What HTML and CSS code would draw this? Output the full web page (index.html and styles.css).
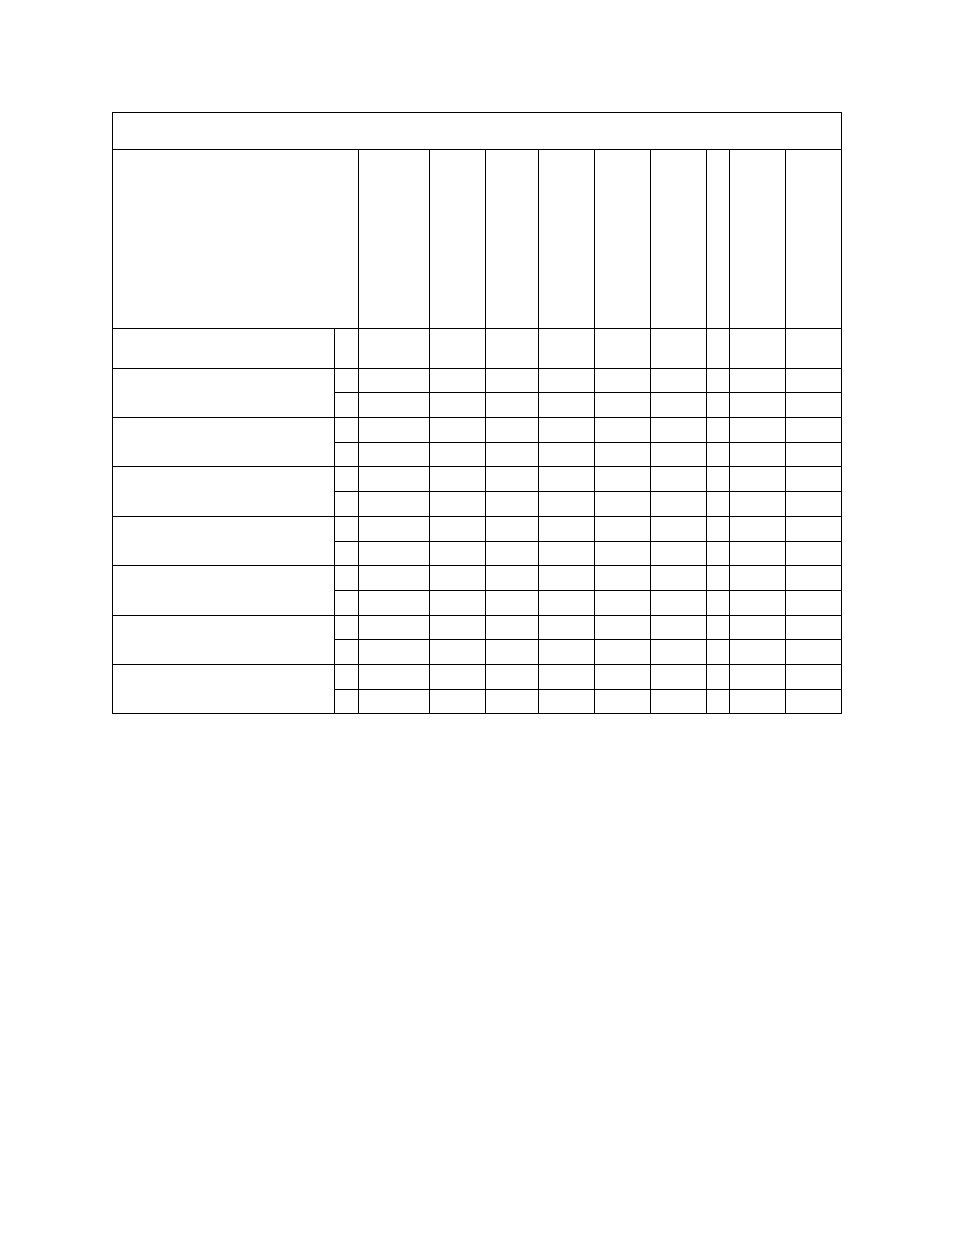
FILE: index.html
```html
<!DOCTYPE html>
<html>
<head>
<meta charset="utf-8">
<link rel="stylesheet" href="styles.css">
</head>
<body>
<div class="page">
  <div class="sheet">
    <div class="cell title"></div>
    <div class="cell head-label"></div>
    <div class="cell"></div><div class="cell"></div><div class="cell"></div><div class="cell"></div><div class="cell"></div><div class="cell"></div><div class="cell"></div><div class="cell"></div><div class="cell"></div>

    <div class="cell"></div><div class="cell"></div>
    <div class="cell"></div><div class="cell"></div><div class="cell"></div><div class="cell"></div><div class="cell"></div><div class="cell"></div><div class="cell"></div><div class="cell"></div><div class="cell"></div>

    <div class="cell group"></div>
    <div class="cell"></div><div class="cell"></div><div class="cell"></div><div class="cell"></div><div class="cell"></div><div class="cell"></div><div class="cell"></div><div class="cell"></div><div class="cell"></div><div class="cell"></div>
    <div class="cell"></div><div class="cell"></div><div class="cell"></div><div class="cell"></div><div class="cell"></div><div class="cell"></div><div class="cell"></div><div class="cell"></div><div class="cell"></div><div class="cell"></div>

    <div class="cell group"></div>
    <div class="cell"></div><div class="cell"></div><div class="cell"></div><div class="cell"></div><div class="cell"></div><div class="cell"></div><div class="cell"></div><div class="cell"></div><div class="cell"></div><div class="cell"></div>
    <div class="cell"></div><div class="cell"></div><div class="cell"></div><div class="cell"></div><div class="cell"></div><div class="cell"></div><div class="cell"></div><div class="cell"></div><div class="cell"></div><div class="cell"></div>

    <div class="cell group"></div>
    <div class="cell"></div><div class="cell"></div><div class="cell"></div><div class="cell"></div><div class="cell"></div><div class="cell"></div><div class="cell"></div><div class="cell"></div><div class="cell"></div><div class="cell"></div>
    <div class="cell"></div><div class="cell"></div><div class="cell"></div><div class="cell"></div><div class="cell"></div><div class="cell"></div><div class="cell"></div><div class="cell"></div><div class="cell"></div><div class="cell"></div>

    <div class="cell group"></div>
    <div class="cell"></div><div class="cell"></div><div class="cell"></div><div class="cell"></div><div class="cell"></div><div class="cell"></div><div class="cell"></div><div class="cell"></div><div class="cell"></div><div class="cell"></div>
    <div class="cell"></div><div class="cell"></div><div class="cell"></div><div class="cell"></div><div class="cell"></div><div class="cell"></div><div class="cell"></div><div class="cell"></div><div class="cell"></div><div class="cell"></div>

    <div class="cell group"></div>
    <div class="cell"></div><div class="cell"></div><div class="cell"></div><div class="cell"></div><div class="cell"></div><div class="cell"></div><div class="cell"></div><div class="cell"></div><div class="cell"></div><div class="cell"></div>
    <div class="cell"></div><div class="cell"></div><div class="cell"></div><div class="cell"></div><div class="cell"></div><div class="cell"></div><div class="cell"></div><div class="cell"></div><div class="cell"></div><div class="cell"></div>

    <div class="cell group"></div>
    <div class="cell"></div><div class="cell"></div><div class="cell"></div><div class="cell"></div><div class="cell"></div><div class="cell"></div><div class="cell"></div><div class="cell"></div><div class="cell"></div><div class="cell"></div>
    <div class="cell"></div><div class="cell"></div><div class="cell"></div><div class="cell"></div><div class="cell"></div><div class="cell"></div><div class="cell"></div><div class="cell"></div><div class="cell"></div><div class="cell"></div>

    <div class="cell group"></div>
    <div class="cell"></div><div class="cell"></div><div class="cell"></div><div class="cell"></div><div class="cell"></div><div class="cell"></div><div class="cell"></div><div class="cell"></div><div class="cell"></div><div class="cell"></div>
    <div class="cell"></div><div class="cell"></div><div class="cell"></div><div class="cell"></div><div class="cell"></div><div class="cell"></div><div class="cell"></div><div class="cell"></div><div class="cell"></div><div class="cell"></div>
  </div>
</div>
</body>
</html>
```
FILE: styles.css
```css
html, body {
  margin: 0;
  padding: 0;
  background: #fff;
  font-family: "Liberation Sans", Arial, sans-serif;
}
.page {
  padding: 112px 0 0 112px;
}
.sheet {
  display: grid;
  width: max-content;
  background: #000;
  border: 1px solid #000;
  gap: 1px;
  grid-template-columns: 221px 23px 70px 55px 52px 55px 55px 55px 22px 55px 55px;
  grid-template-rows: 36px 178px 39px 23px 24px 24px 23px 24px 24px 24px 23px 24px 24px 23px 24px 24px 23px;
}
.cell {
  background: #fff;
}
.title {
  grid-column: 1 / -1;
}
.head-label {
  grid-column: 1 / 3;
}
.group {
  grid-row: span 2;
}
```
